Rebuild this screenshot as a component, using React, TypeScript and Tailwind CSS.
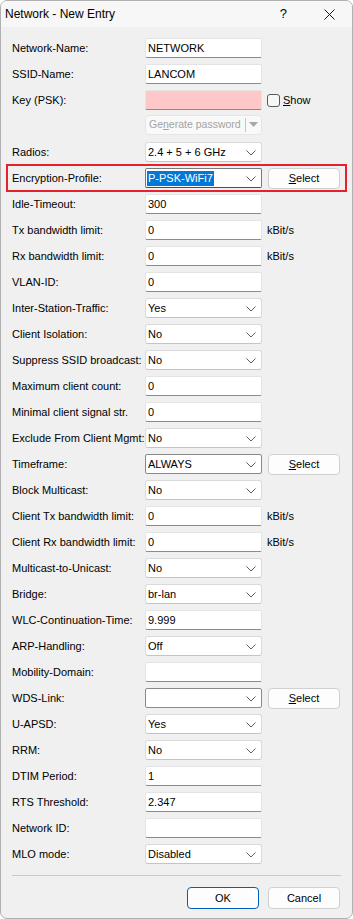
import React from 'react';

type Row =
  | { label: string; kind: 'text'; value: string; suffix?: string; pink?: boolean; show?: boolean }
  | { label: string; kind: 'select'; value: string }
  | { label: string; kind: 'combo'; value: string; select?: boolean; focused?: boolean }
  | { label: string; kind: 'generate' };

// field list, one entry per 26px row
const ROWS: Row[] = [
  { label: 'Network-Name:', kind: 'text', value: 'NETWORK' },
  { label: 'SSID-Name:', kind: 'text', value: 'LANCOM' },
  { label: 'Key (PSK):', kind: 'text', value: '', pink: true, show: true },
  { label: '', kind: 'generate' },
  { label: 'Radios:', kind: 'select', value: '2.4 + 5 + 6 GHz' },
  { label: 'Encryption-Profile:', kind: 'combo', value: 'P-PSK-WiFi7', select: true, focused: true },
  { label: 'Idle-Timeout:', kind: 'text', value: '300' },
  { label: 'Tx bandwidth limit:', kind: 'text', value: '0', suffix: 'kBit/s' },
  { label: 'Rx bandwidth limit:', kind: 'text', value: '0', suffix: 'kBit/s' },
  { label: 'VLAN-ID:', kind: 'text', value: '0' },
  { label: 'Inter-Station-Traffic:', kind: 'select', value: 'Yes' },
  { label: 'Client Isolation:', kind: 'select', value: 'No' },
  { label: 'Suppress SSID broadcast:', kind: 'select', value: 'No' },
  { label: 'Maximum client count:', kind: 'text', value: '0' },
  { label: 'Minimal client signal str.', kind: 'text', value: '0' },
  { label: 'Exclude From Client Mgmt:', kind: 'select', value: 'No' },
  { label: 'Timeframe:', kind: 'combo', value: 'ALWAYS', select: true },
  { label: 'Block Multicast:', kind: 'select', value: 'No' },
  { label: 'Client Tx bandwidth limit:', kind: 'text', value: '0', suffix: 'kBit/s' },
  { label: 'Client Rx bandwidth limit:', kind: 'text', value: '0', suffix: 'kBit/s' },
  { label: 'Multicast-to-Unicast:', kind: 'select', value: 'No' },
  { label: 'Bridge:', kind: 'select', value: 'br-lan' },
  { label: 'WLC-Continuation-Time:', kind: 'text', value: '9.999' },
  { label: 'ARP-Handling:', kind: 'select', value: 'Off' },
  { label: 'Mobility-Domain:', kind: 'text', value: '' },
  { label: 'WDS-Link:', kind: 'combo', value: '', select: true },
  { label: 'U-APSD:', kind: 'select', value: 'Yes' },
  { label: 'RRM:', kind: 'select', value: 'No' },
  { label: 'DTIM Period:', kind: 'text', value: '1' },
  { label: 'RTS Threshold:', kind: 'text', value: '2.347' },
  { label: 'Network ID:', kind: 'text', value: '' },
  { label: 'MLO mode:', kind: 'select', value: 'Disabled' },
];

function Chevron() {
  return (
    <svg width="10" height="6" viewBox="0 0 10 6" className="absolute right-[5px] top-[7px]">
      <path d="M0.5 0.5 L5 5 L9.5 0.5" fill="none" stroke="#5f5f5f" strokeWidth="1" />
    </svg>
  );
}

function SelectButton() {
  return (
    <button
      type="button"
      className="ml-[6px] h-[21px] w-[72px] rounded-[4px] border border-[#d0d0d0] bg-[#fdfdfd] text-[11px] text-black"
    >
      <span className="underline">S</span>elect
    </button>
  );
}

function Field({ row }: { row: Row }) {
  if (row.kind === 'generate') {
    return (
      <div className="-mt-[2px] flex h-[20px] w-[117px] items-center overflow-hidden rounded-[4px] border border-[#e6e6e6] bg-[#f9f9f9] pl-[3px] text-[10.5px] text-[#a3a3a3]">
        <span className="flex-1 whitespace-nowrap">
          Ge<span className="underline">n</span>erate password
        </span>
        <span className="h-[14px] w-px shrink-0 bg-[#c4c4c4]" />
        <svg width="13" height="8" viewBox="0 0 13 8" className="mx-[1px] shrink-0">
          <path d="M2 1 L11 1 L6.5 6 Z" fill="#a8a8a8" />
        </svg>
      </div>
    );
  }
  if (row.kind === 'text') {
    return (
      <>
        <div
          className={
            'flex h-[20px] w-[117px] items-center rounded-[2px] border border-[#e4e4e4] border-b-[#8b8b8b] px-[2px] ' +
            (row.pink ? 'bg-[#ffc8c8]' : 'bg-white')
          }
        >
          {row.value}
        </div>
        {row.suffix && <span className="ml-[5px]">{row.suffix}</span>}
        {row.show && (
          <label className="ml-[5px] flex items-center gap-[3px]">
            <span className="h-[13px] w-[13px] rounded-[3px] border border-[#5a5a5a] bg-[#f7f7f7]" />
            <span>
              <span className="underline">S</span>how
            </span>
          </label>
        )}
      </>
    );
  }
  if (row.kind === 'select') {
    return (
      <div className="relative flex h-[20px] w-[117px] items-center rounded-[3px] border border-[#dadada] border-b-[#c4c4c4] bg-white px-[2px]">
        {row.value}
        <Chevron />
      </div>
    );
  }
  return (
    <>
      <div
        className={
          'relative flex h-[20px] w-[117px] items-center rounded-[2px] border bg-white px-[1px] ' +
          (row.focused ? 'border-[#7a7a7a] border-b-[#005fb8]' : 'border-[#8a8a8a]')
        }
      >
        {row.focused ? (
          <span className="bg-[#0078d7] px-[1px] leading-[15px] text-white">{row.value}</span>
        ) : (
          <span className="px-[1px]">{row.value}</span>
        )}
        <Chevron />
      </div>
      {row.select && <SelectButton />}
    </>
  );
}

export default function App() {
  return (
    <div
      className="flex h-[919px] w-[353px] flex-col overflow-hidden rounded-[7px] border border-[#b0b0b0] bg-[#f0f0f0] text-[11px] text-black"
      style={{ fontFamily: '"Liberation Sans", Arial, sans-serif' }}
    >
      {/* Title bar */}
      <div className="flex h-[26px] items-center bg-[#f7f7f7] pl-[4px]">
        <span className="flex-1 text-[12px]">Network - New Entry</span>
        <span className="mr-[37px] text-[13px]">?</span>
        <svg width="11" height="11" viewBox="0 0 11 11" className="mr-[17px]">
          <path d="M0.5 0.5 L10.5 10.5 M10.5 0.5 L0.5 10.5" stroke="#1a1a1a" strokeWidth="1" />
        </svg>
      </div>

      {/* Form rows */}
      <div className="flex flex-col px-[11px] pt-[8px]">
        {ROWS.map((row, i) => {
          const highlighted = row.kind === 'combo' && row.focused;
          return (
            <div
              key={i}
              className={
                highlighted
                  ? '-mx-[6px] -my-[1px] flex h-[28px] items-center border-2 border-[#e5222b] px-[4px]'
                  : 'flex h-[26px] items-center'
              }
            >
              <span className="w-[133px] shrink-0 whitespace-nowrap">{row.label}</span>
              <Field row={row} />
            </div>
          );
        })}
      </div>

      {/* Footer */}
      <div className="mx-[11px] mt-[8px] h-px bg-[#c9c9c9]" />
      <div className="mt-[11px] flex justify-end gap-[9px] pr-[12px]">
        <button
          type="button"
          className="h-[22px] w-[72px] rounded-[4px] border border-[#005fb8] bg-[#fdfdfd] text-[11px]"
        >
          OK
        </button>
        <button
          type="button"
          className="h-[22px] w-[72px] rounded-[4px] border border-[#d0d0d0] bg-[#fdfdfd] text-[11px]"
        >
          Cancel
        </button>
      </div>
    </div>
  );
}
